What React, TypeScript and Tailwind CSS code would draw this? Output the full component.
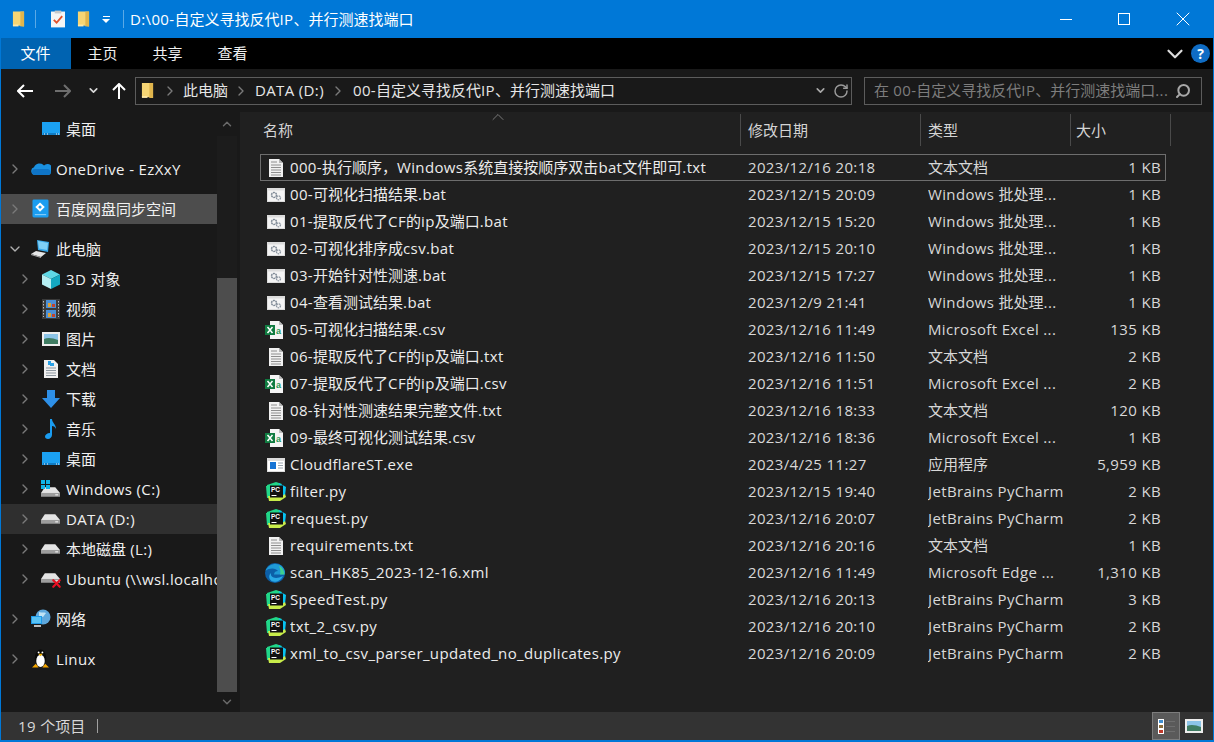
import { ChevronDown, ChevronRight, ChevronUp, RotateCw, Search, X } from "lucide-react";
import type { ReactNode } from "react";

const FONT = "font-['Open_Sans','Noto_Sans_CJK_SC',sans-serif]";

// latin runs get a bit of tracking to reach the width of the UI font in the picture
function Txt({ children }: { children: string }) {
  const parts = children.split(/([\u3000-\u9fff\uff00-\uffef]+)/);
  return (
    <>
      {parts.map((p, i) =>
        i % 2 ? (
          <span key={i}>{p}</span>
        ) : (
          <span key={i} className="tracking-[0.36px]">
            {p}
          </span>
        )
      )}
    </>
  );
}

function Folder({ className = "w-[13px] h-[18px]" }: { className?: string }) {
  return (
    <svg viewBox="0 0 14 18" className={className}>
      <path d="M1 1h12v16l-6-1H1z" fill="#f6d574" />
      <path d="M9 1h4v16H9z" fill="#e0b54c" />
      <path d="M1 15h6v2H1z" fill="#ffe9a8" />
    </svg>
  );
}

function TxtIcon() {
  return (
    <svg viewBox="0 0 14 18" className="w-[14px] h-[18px]">
      <path d="M0 0h10l4 4v14H0z" fill="#f1f1f1" />
      <path d="M10 0l4 4h-4z" fill="#b5b5b5" />
      <path d="M2 3h6M2 6h10M2 8.500h10M2 11h10M2 13.500h10M2 16h10" stroke="#8e8e8e" strokeWidth="1" />
    </svg>
  );
}

function BatIcon() {
  return (
    <svg viewBox="0 0 18 14" className="w-[18px] h-[14px]">
      <path d="M0 0h18v14H0z" fill="#dcdcdc" />
      <path d="M1 2.500h16V13H1z" fill="#f4f4f4" />
      <circle cx="7" cy="7" r="2.500" fill="none" stroke="#7f8a96" strokeWidth="1.500" strokeDasharray="2 0.600" />
      <circle cx="11.500" cy="9.800" r="2" fill="none" stroke="#8f98a3" strokeWidth="1.300" strokeDasharray="1.600 0.600" />
    </svg>
  );
}

function ExeIcon() {
  return (
    <svg viewBox="0 0 18 14" className="w-[18px] h-[14px]">
      <path d="M0 0h18v14H0z" fill="#dcdcdc" />
      <path d="M1 3h16v10H1z" fill="#fff" />
      <path d="M3 4h6v7H3z" fill="#1573d4" />
      <path d="M11 5h5M11 7.500h5M11 10h5" stroke="#9aa4ae" />
    </svg>
  );
}

function ExcelIcon() {
  return (
    <svg viewBox="0 0 18 18" className="w-[18px] h-[18px] -translate-x-[2px]">
      <path d="M5 0h9l4 4v14H5z" fill="#f4f4f4" />
      <path d="M14 0l4 4h-4z" fill="#bcbcbc" />
      <path d="M0 4h10v10H0z" fill="#107c41" />
      <path d="M2.500 6l5 6M7.500 6l-5 6" stroke="#fff" strokeWidth="1.500" />
      <text x="11" y="13" fill="#1f9a5a" fontSize="9" fontWeight="700" fontFamily="Liberation Sans">a</text>
    </svg>
  );
}

function PyCharm() {
  return (
    <svg viewBox="0 0 20 19" className="w-[20px] h-[19px]">
      <path d="M1 3l9-3 6 2-4 4H1z" fill="#21d789" />
      <path d="M13 1l7 4-1 9-4 1z" fill="#07c3f2" />
      <path d="M0 4h4v12H1z" fill="#21d789" />
      <path d="M2 14h14l3-2 1 3-6 4H3z" fill="#c8ec4a" />
      <path d="M4 3.500h13v12H4z" fill="#111" />
      <path d="M5.500 13.500h5" stroke="#fff" strokeWidth="1" />
      <text x="5" y="10" fill="#fff" fontSize="6.500" fontWeight="700" fontFamily="Liberation Sans">PC</text>
    </svg>
  );
}

function EdgeIcon() {
  return (
    <svg viewBox="0 0 20 20" className="w-[20px] h-[20px] -translate-x-px">
      <circle cx="10" cy="10" r="10" fill="#0c5fa8" />
      <path d="M0.500 8C3 1 13-1.500 18 4.500c2 2.500 2.500 5 1.500 7H9c0-2.500 2-3.500 4-3.500-2-3-8.500-3.500-12.500 0z" fill="#1f9ad6" />
      <path d="M14 3c3 1 5 4 5.500 8.500H15c1-3 0-6-1-8.500z" fill="#3fd08f" />
      <path d="M18 13c-2 5-8 7-11.500 5C3 15 4 11.500 6 10c-1 4 4 7 12 3z" fill="#2aa9e6" />
    </svg>
  );
}

function DesktopIcon() {
  return (
    <svg viewBox="0 0 18 14" className="w-[18px] h-[14px]">
      <path d="M0 0h18v13H0z" fill="#1ba1f2" />
      <path d="M1 11h16v2H1z" fill="#0f7cc4" />
      <path d="M2 12h1M5 12h1M14 12h1M16 12h1" stroke="#fff" />
    </svg>
  );
}

function Cloud() {
  return (
    <svg viewBox="0 0 20 12" className="w-[20px] h-[12px]">
      <path d="M4 12a4 4 0 0 1-1-7.800A6 6 0 0 1 13 2.500 4.500 4.500 0 0 1 20 9c0 2-1 3-3 3z" fill="#1a90e0" />
      <path d="M4 12a3 3 0 0 1 0-6h12a3 3 0 0 1 1 6z" fill="#0f74c6" />
    </svg>
  );
}

function BaiduIcon() {
  return (
    <svg viewBox="0 0 18 20" className="w-[17px] h-[20px]">
      <rect width="17" height="19" x="0.500" rx="1.500" fill="#1b9df0" />
      <path d="M8.500 3l5 5-5 5-5-5z" fill="#fff" />
      <path d="M8.500 6l2 2-2 2-2-2z" fill="#1b9df0" />
      <path d="M3 16h12" stroke="#9bd6fb" />
    </svg>
  );
}

function PcIcon() {
  return (
    <svg viewBox="0 0 20 18" className="w-[20px] h-[18px]">
      <path d="M6 0l12 2-1 10-10-2z" fill="#38a7e8" />
      <path d="M7 1l10 2-1 7-8-1.500z" fill="#7fd0f7" />
      <path d="M0 14l5-3 10 2-5 4z" fill="#e6e6e6" />
      <path d="M0 14l10 3v1L0 15z" fill="#a8a8a8" />
    </svg>
  );
}

function CubeIcon() {
  return (
    <svg viewBox="0 0 18 19" className="w-[18px] h-[19px]">
      <path d="M9 0l9 4.500-9 4.500-9-4.500z" fill="#5fd8e6" />
      <path d="M0 4.500l9 4.500v10l-9-4.500z" fill="#b6eff3" />
      <path d="M18 4.500l-9 4.500v10l9-4.500z" fill="#14a9c2" />
    </svg>
  );
}

function VideoIcon() {
  return (
    <svg viewBox="0 0 18 20" className="w-[18px] h-[20px]">
      <path d="M0 0h18v20H0z" fill="#3a3a3a" />
      <path d="M4 1h10v8H4z" fill="#4b8fd6" />
      <path d="M4 11h10v8H4z" fill="#4b8fd6" />
      <path d="M6 4h3v4H6zM6 14h3v4H6z" fill="#d9a13a" />
      <path d="M10 5h3v3h-3zM10 15h3v3h-3z" fill="#c2452d" />
      <path d="M1.500 2v16M16.500 2v16" stroke="#bbb" strokeDasharray="1.500 1.500" />
    </svg>
  );
}

function PictureIcon() {
  return (
    <svg viewBox="0 0 18 14" className="w-[18px] h-[14px]">
      <path d="M0 0h18v14H0z" fill="#ededed" />
      <path d="M2 2h14v10H2z" fill="#8cc4e8" />
      <path d="M2 7c4-2 9-1 14 1v4H2z" fill="#3f7c62" />
    </svg>
  );
}

function DocsIcon() {
  return (
    <svg viewBox="0 0 14 18" className="w-[14px] h-[18px]">
      <path d="M0 0h10l4 4v14H0z" fill="#f0f0f0" />
      <path d="M4 1h3v4H4zM6 3h4v3H6z" fill="#2aa1e6" />
      <path d="M2 8h10M2 10.500h10M2 13h10M2 15.500h10" stroke="#8d97a0" />
    </svg>
  );
}

function DownloadIcon() {
  return (
    <svg viewBox="0 0 18 18" className="w-[18px] h-[18px]">
      <path d="M5 0h8v8h5l-9 10-9-10h5z" fill="#2e90e8" />
    </svg>
  );
}

function MusicIcon() {
  return (
    <svg viewBox="0 0 12 20" className="w-[12px] h-[20px]">
      <path d="M5 0h2c0 4 4 5 4 10-1-2-2-3-4-3v9c0 2-2 4-4 4s-3-1-3-2.500S2 14 5 14z" fill="#1a9cf0" />
    </svg>
  );
}

function DriveIcon() {
  return (
    <svg viewBox="0 0 20 12" className="w-[19px] h-[12px]">
      <path d="M4 1h11l5 6H0z" fill="#e4e4e4" />
      <path d="M0 7h20v4H0z" fill="#9d9d9d" />
      <path d="M15 9h3" stroke="#fff" />
    </svg>
  );
}

function WinDriveIcon() {
  return (
    <div className="relative w-[20px] h-[18px]">
      <div className="absolute bottom-0 left-0 flex">
        <DriveIcon />
      </div>
      <div className="absolute top-0 left-0 grid grid-cols-2 gap-px">
        <div className="w-[4px] h-[4px] bg-[#11b5e8]" />
        <div className="w-[4px] h-[4px] bg-[#11b5e8]" />
        <div className="w-[4px] h-[4px] bg-[#11b5e8]" />
        <div className="w-[4px] h-[4px] bg-[#11b5e8]" />
      </div>
    </div>
  );
}

function NetDriveIcon() {
  return (
    <div className="relative w-[20px] h-[16px]">
      <div className="absolute top-[1px] left-0 flex">
        <DriveIcon />
      </div>
      <X className="absolute right-[-2px] bottom-[-3px] w-[13px] h-[13px] text-[#e81123]" strokeWidth={4} />
    </div>
  );
}

function NetworkIcon() {
  return (
    <svg viewBox="0 0 20 20" className="w-[20px] h-[20px]">
      <circle cx="12" cy="8" r="7.500" fill="#5fa8dc" />
      <path d="M8 3c3 1 5 0 7 1l-3 4-4-1z" fill="#bfe3f5" />
      <path d="M0 7h11v8H0z" fill="#1f9ae8" />
      <path d="M1 8h9v6H1z" fill="#58c2f5" />
      <path d="M3 16h7v2H3z" fill="#bcbcbc" />
    </svg>
  );
}

function TuxIcon() {
  return (
    <svg viewBox="0 0 18 20" className="w-[17px] h-[20px]">
      <ellipse cx="9" cy="9" rx="6" ry="9" fill="#0a0a0a" />
      <ellipse cx="9" cy="12" rx="4.500" ry="6.500" fill="#fff" />
      <path d="M6.500 4.500h5l-2.500 2.500z" fill="#f4b400" />
      <circle cx="7" cy="3" r="1" fill="#fff" />
      <circle cx="11" cy="3" r="1" fill="#fff" />
      <path d="M0 19l4-4 3 4zM18 19l-4-4-3 4z" fill="#f4a500" />
    </svg>
  );
}

type NavItem = { label: string; icon: ReactNode; indent?: boolean; arrow?: "right" | "down" | "none"; gap?: boolean; active?: boolean; hover?: boolean };

const nav: NavItem[] = [
  { label: "桌面", icon: <DesktopIcon />, indent: true, arrow: "none" },
  { label: "OneDrive - EzXxY", icon: <Cloud />, gap: true },
  { label: "百度网盘同步空间", icon: <BaiduIcon />, gap: true, active: true },
  { label: "此电脑", icon: <PcIcon />, gap: true, arrow: "down" },
  { label: "3D 对象", icon: <CubeIcon />, indent: true },
  { label: "视频", icon: <VideoIcon />, indent: true },
  { label: "图片", icon: <PictureIcon />, indent: true },
  { label: "文档", icon: <DocsIcon />, indent: true },
  { label: "下载", icon: <DownloadIcon />, indent: true },
  { label: "音乐", icon: <MusicIcon />, indent: true },
  { label: "桌面", icon: <DesktopIcon />, indent: true },
  { label: "Windows (C:)", icon: <WinDriveIcon />, indent: true },
  { label: "DATA (D:)", icon: <DriveIcon />, indent: true, hover: true },
  { label: "本地磁盘 (L:)", icon: <DriveIcon />, indent: true },
  { label: "Ubuntu (\\\\wsl.localhost)", icon: <NetDriveIcon />, indent: true },
  { label: "网络", icon: <NetworkIcon />, gap: true },
  { label: "Linux", icon: <TuxIcon />, gap: true },
];

type Row = { name: string; date: string; type: string; size: string; icon: ReactNode; focus?: boolean };

const rows: Row[] = [
  { name: "000-执行顺序，Windows系统直接按顺序双击bat文件即可.txt", date: "2023/12/16 20:18", type: "文本文档", size: "1 KB", icon: <TxtIcon />, focus: true },
  { name: "00-可视化扫描结果.bat", date: "2023/12/15 20:09", type: "Windows 批处理...", size: "1 KB", icon: <BatIcon /> },
  { name: "01-提取反代了CF的ip及端口.bat", date: "2023/12/15 15:20", type: "Windows 批处理...", size: "1 KB", icon: <BatIcon /> },
  { name: "02-可视化排序成csv.bat", date: "2023/12/15 20:10", type: "Windows 批处理...", size: "1 KB", icon: <BatIcon /> },
  { name: "03-开始针对性测速.bat", date: "2023/12/15 17:27", type: "Windows 批处理...", size: "1 KB", icon: <BatIcon /> },
  { name: "04-查看测试结果.bat", date: "2023/12/9 21:41", type: "Windows 批处理...", size: "1 KB", icon: <BatIcon /> },
  { name: "05-可视化扫描结果.csv", date: "2023/12/16 11:49", type: "Microsoft Excel ...", size: "135 KB", icon: <ExcelIcon /> },
  { name: "06-提取反代了CF的ip及端口.txt", date: "2023/12/16 11:50", type: "文本文档", size: "2 KB", icon: <TxtIcon /> },
  { name: "07-提取反代了CF的ip及端口.csv", date: "2023/12/16 11:51", type: "Microsoft Excel ...", size: "2 KB", icon: <ExcelIcon /> },
  { name: "08-针对性测速结果完整文件.txt", date: "2023/12/16 18:33", type: "文本文档", size: "120 KB", icon: <TxtIcon /> },
  { name: "09-最终可视化测试结果.csv", date: "2023/12/16 18:36", type: "Microsoft Excel ...", size: "1 KB", icon: <ExcelIcon /> },
  { name: "CloudflareST.exe", date: "2023/4/25 11:27", type: "应用程序", size: "5,959 KB", icon: <ExeIcon /> },
  { name: "filter.py", date: "2023/12/15 19:40", type: "JetBrains PyCharm", size: "2 KB", icon: <PyCharm /> },
  { name: "request.py", date: "2023/12/16 20:07", type: "JetBrains PyCharm", size: "2 KB", icon: <PyCharm /> },
  { name: "requirements.txt", date: "2023/12/16 20:16", type: "文本文档", size: "1 KB", icon: <TxtIcon /> },
  { name: "scan_HK85_2023-12-16.xml", date: "2023/12/16 11:49", type: "Microsoft Edge ...", size: "1,310 KB", icon: <EdgeIcon /> },
  { name: "SpeedTest.py", date: "2023/12/16 20:13", type: "JetBrains PyCharm", size: "3 KB", icon: <PyCharm /> },
  { name: "txt_2_csv.py", date: "2023/12/16 20:10", type: "JetBrains PyCharm", size: "2 KB", icon: <PyCharm /> },
  { name: "xml_to_csv_parser_updated_no_duplicates.py", date: "2023/12/16 20:09", type: "JetBrains PyCharm", size: "2 KB", icon: <PyCharm /> },
];

function NavRow({ item }: { item: NavItem }) {
  const arrow = item.arrow ?? "right";
  return (
    <div
      className={`flex items-center h-[30px] w-[216px] overflow-hidden shrink-0 ${item.gap ? "mt-[10px]" : ""} ${item.active ? "bg-[#4d4d4d]" : ""} ${item.hover ? "bg-[#2f2f2f]" : ""} ${item.indent ? "pl-[19px]" : "pl-[9px]"}`}
    >
      <div className="w-[15px] shrink-0 flex items-center justify-start text-[#7a7a7a]">
        {arrow === "right" && <ChevronRight className="w-[16px] h-[16px] shrink-0 -ml-[3px]" strokeWidth={2} />}
        {arrow === "down" && <ChevronDown className="w-[16px] h-[16px] shrink-0 -ml-[3px] text-[#b0b0b0]" strokeWidth={2} />}
      </div>
      <div className="w-[31px] shrink-0 flex items-center justify-center">{item.icon}</div>
      <span className="text-[15px] text-[#f0f0f0] whitespace-nowrap">
        <Txt>{item.label}</Txt>
      </span>
    </div>
  );
}

function ColHead({ label, className }: { label: string; className: string }) {
  return (
    <div className={`h-[32px] pt-[1px] flex items-center border-r border-[#4a4a4a] text-[15px] text-[#d4d4d4] ${className}`}>{label}</div>
  );
}

export default function App() {
  return (
    <div className={`w-[1214px] h-[742px] flex flex-col overflow-hidden bg-[#202020] border-x border-b-2 border-[#0078d7] ${FONT}`}>
      {/* title bar */}
      <div className="h-[38px] shrink-0 bg-[#0078d7] flex items-center text-white -mx-px">
        <div className="ml-[12px] flex items-center">
          <Folder />
        </div>
        <div className="ml-[10px] w-px h-[18px] bg-[#5aa9e6]" />
        <div className="ml-[15px] flex items-center">
          <svg viewBox="0 0 15 18" className="w-[14px] h-[18px]">
            <path d="M0 1h15v17H0z" fill="#f5f5f5" />
            <path d="M4 0h7v3H4z" fill="#c9c9c9" />
            <path d="M3 10l3 3 6-7" stroke="#e2502a" strokeWidth="2" fill="none" />
          </svg>
        </div>
        <div className="ml-[12px] flex items-center">
          <Folder />
        </div>
        <div className="ml-[12px] flex flex-col items-center gap-[2px]">
          <div className="w-[7px] h-px bg-white" />
          <div className="w-0 h-0 border-x-[4px] border-t-[4px] border-x-transparent border-t-white" />
        </div>
        <div className="ml-[13px] w-px h-[18px] bg-[#5aa9e6]" />
        <span className="ml-[6px] text-[15px] whitespace-nowrap">
          <Txt>D:\00-自定义寻找反代IP、并行测速找端口</Txt>
        </span>
        <div className="ml-auto flex items-center h-full">
          <div className="w-[46px] flex justify-center">
            <div className="w-[12px] h-px bg-white" />
          </div>
          <div className="w-[46px] ml-[12px] flex justify-center">
            <div className="w-[12px] h-[12px] border border-white" />
          </div>
          <div className="w-[46px] ml-[13px] flex justify-center">
            <X className="w-[24px] h-[24px]" strokeWidth={1} />
          </div>
          <div className="w-[8px]" />
        </div>
      </div>

      {/* ribbon tabs */}
      <div className="h-[31px] shrink-0 bg-black flex items-center text-[15px] text-[#f0f0f0] -mx-px">
        <div className="w-[71px] h-full bg-[#0063b1] flex items-center justify-center text-white">文件</div>
        <div className="w-[65px] -ml-px text-center">主页</div>
        <div className="w-[65px] text-center">共享</div>
        <div className="w-[65px] text-center">查看</div>
        <div className="ml-auto flex items-center mr-[4px]">
          <ChevronDown className="w-[26px] h-[26px] text-[#dcdcdc]" strokeWidth={2} />
          <div className="ml-[3px] w-[19px] h-[19px] rounded-full bg-[#0f6cc4] flex items-center justify-center text-white text-[14px] font-bold leading-none">?</div>
        </div>
      </div>

      {/* address bar */}
      <div className="h-[43px] shrink-0 bg-[#191919] flex items-center">
        <svg viewBox="0 0 16 14" className="ml-[16px] w-[16px] h-[14px]" fill="none" stroke="#fff" strokeWidth="2">
          <path d="M1 7h15M7 1L1 7l6 6" />
        </svg>
        <svg viewBox="0 0 16 14" className="ml-[22px] w-[16px] h-[14px]" fill="none" stroke="#6e6e6e" strokeWidth="2">
          <path d="M0 7h15M9 1l6 6-6 6" />
        </svg>
        <ChevronDown className="ml-[16px] w-[13px] h-[13px] text-[#d8d8d8]" strokeWidth={3} />
        <svg viewBox="0 0 14 16" className="ml-[12px] w-[14px] h-[16px]" fill="none" stroke="#fff" strokeWidth="2">
          <path d="M7 16V1M1 7l6-6 6 6" />
        </svg>
        <div className="ml-[9px] w-[717px] h-[28px] border border-[#5c5c5c] flex items-center text-[15px] text-[#e6e6e6]">
          <div className="ml-[5px] flex">
            <Folder className="w-[13px] h-[17px]" />
          </div>
          <ChevronRight className="ml-[8px] w-[16px] h-[16px] text-[#7a7a7a]" strokeWidth={2} />
          <span className="ml-[5px]">此电脑</span>
          <ChevronRight className="ml-[5px] w-[16px] h-[16px] text-[#7a7a7a]" strokeWidth={2} />
          <span className="ml-[6px]">
            <Txt>DATA (D:)</Txt>
          </span>
          <ChevronRight className="ml-[6px] w-[16px] h-[16px] text-[#7a7a7a]" strokeWidth={2} />
          <span className="ml-[7px] whitespace-nowrap">
            <Txt>00-自定义寻找反代IP、并行测速找端口</Txt>
          </span>
          <ChevronDown className="ml-auto w-[13px] h-[13px] text-[#a8a8a8]" strokeWidth={3} />
          <RotateCw className="ml-[6px] mr-[2px] w-[16px] h-[16px] text-[#9a9a9a]" strokeWidth={2.200} />
        </div>
        <div className="ml-[12px] w-[338px] h-[28px] border border-[#5c5c5c] flex items-center pl-[9px] text-[15px] text-[#7d7d7d]">
          <span className="whitespace-nowrap overflow-hidden w-[294px]">
            <Txt>在 00-自定义寻找反代IP、并行测速找端口...</Txt>
          </span>
          <Search className="ml-auto mr-[10px] w-[16px] h-[16px] text-[#a8a8a8] -scale-x-100" strokeWidth={3} />
        </div>
      </div>

      {/* body */}
      <div className="flex-1 flex min-h-0">
        <div className="w-[236px] shrink-0 bg-[#191919] flex">
          <div className="w-[216px] pt-[2px] flex flex-col">
            {nav.map((item, i) => (
              <NavRow key={i} item={item} />
            ))}
          </div>
          <div className="w-[20px] flex flex-col items-center bg-[#1c1c1c]">
            <div className="h-[24px] w-full flex items-center justify-center bg-[#191919]">
              <ChevronUp className="w-[14px] h-[14px] text-[#6a6a6a]" strokeWidth={2.500} />
            </div>
            <div className="h-[142px]" />
            <div className="w-full flex-1 bg-[#4d4d4d]" />
            <div className="h-[20px] w-full flex items-center justify-center bg-[#191919]">
              <ChevronDown className="w-[14px] h-[14px] text-[#6a6a6a]" strokeWidth={2.500} />
            </div>
          </div>
        </div>
        <div className="w-[3px] shrink-0 bg-[#191919]" />

        <div className="flex-1 min-w-0 bg-[#202020] relative">
          {/* sort arrow sits over the header */}
          <ChevronUp className="absolute left-[248px] -top-[5px] w-[20px] h-[20px] text-[#8a8a8a]" strokeWidth={1} />
          <div className="flex pt-[2px] pl-[23px]">
            <ColHead label="名称" className="w-[478px]" />
            <ColHead label="修改日期" className="w-[180px] pl-[7px]" />
            <ColHead label="类型" className="w-[150px] pl-[7px]" />
            <ColHead label="大小" className="w-[100px] pl-[5px]" />
          </div>
          <div className="mt-[8px] pl-[20px]">
            {rows.map((r) => (
              <div
                key={r.name}
                className={`w-[906px] h-[27px] flex items-center text-[15px] text-[#ececec] ${r.focus ? "border border-[#6e6e6e]" : "border border-transparent"}`}
              >
                <div className="w-[29px] shrink-0 flex items-center justify-center">{r.icon}</div>
                <div className="w-[458px] shrink-0 whitespace-nowrap overflow-hidden">
                  <Txt>{r.name}</Txt>
                </div>
                <div className="w-[180px] shrink-0 text-[#d8d8d8]">
                  <Txt>{r.date}</Txt>
                </div>
                <div className="w-[150px] shrink-0 text-[#d8d8d8] whitespace-nowrap overflow-hidden">
                  <Txt>{r.type}</Txt>
                </div>
                <div className="w-[83px] shrink-0 text-right text-[#d8d8d8]">
                  <Txt>{r.size}</Txt>
                </div>
              </div>
            ))}
          </div>
        </div>
      </div>

      {/* status bar */}
      <div className="h-[28px] shrink-0 bg-[#333333] flex items-center text-[15px] text-[#d8d8d8]">
        <span className="ml-[17px]">
          <Txt>19 个项目</Txt>
        </span>
        <div className="ml-[12px] w-px h-[14px] bg-[#a0a0a0]" />
        <div className="ml-auto h-full w-[28px] bg-[#5a5a5a] border border-[#7d7d7d] flex flex-col items-start justify-center gap-[2px] pl-[6px]">
          {["bg-[#3f8ed0]", "bg-[#8a6d3b]", "bg-[#c0392b]"].map((c) => (
            <div key={c} className="flex items-center gap-[3px]">
              <div className={`w-[4px] h-[3px] outline outline-1 outline-white ${c}`} />
              <div className="w-[9px] h-px bg-[#6e6e6e]" />
            </div>
          ))}
        </div>
        <div className="w-[28px] mr-[5px] flex items-center justify-center">
          <PictureIcon />
        </div>
      </div>
    </div>
  );
}
